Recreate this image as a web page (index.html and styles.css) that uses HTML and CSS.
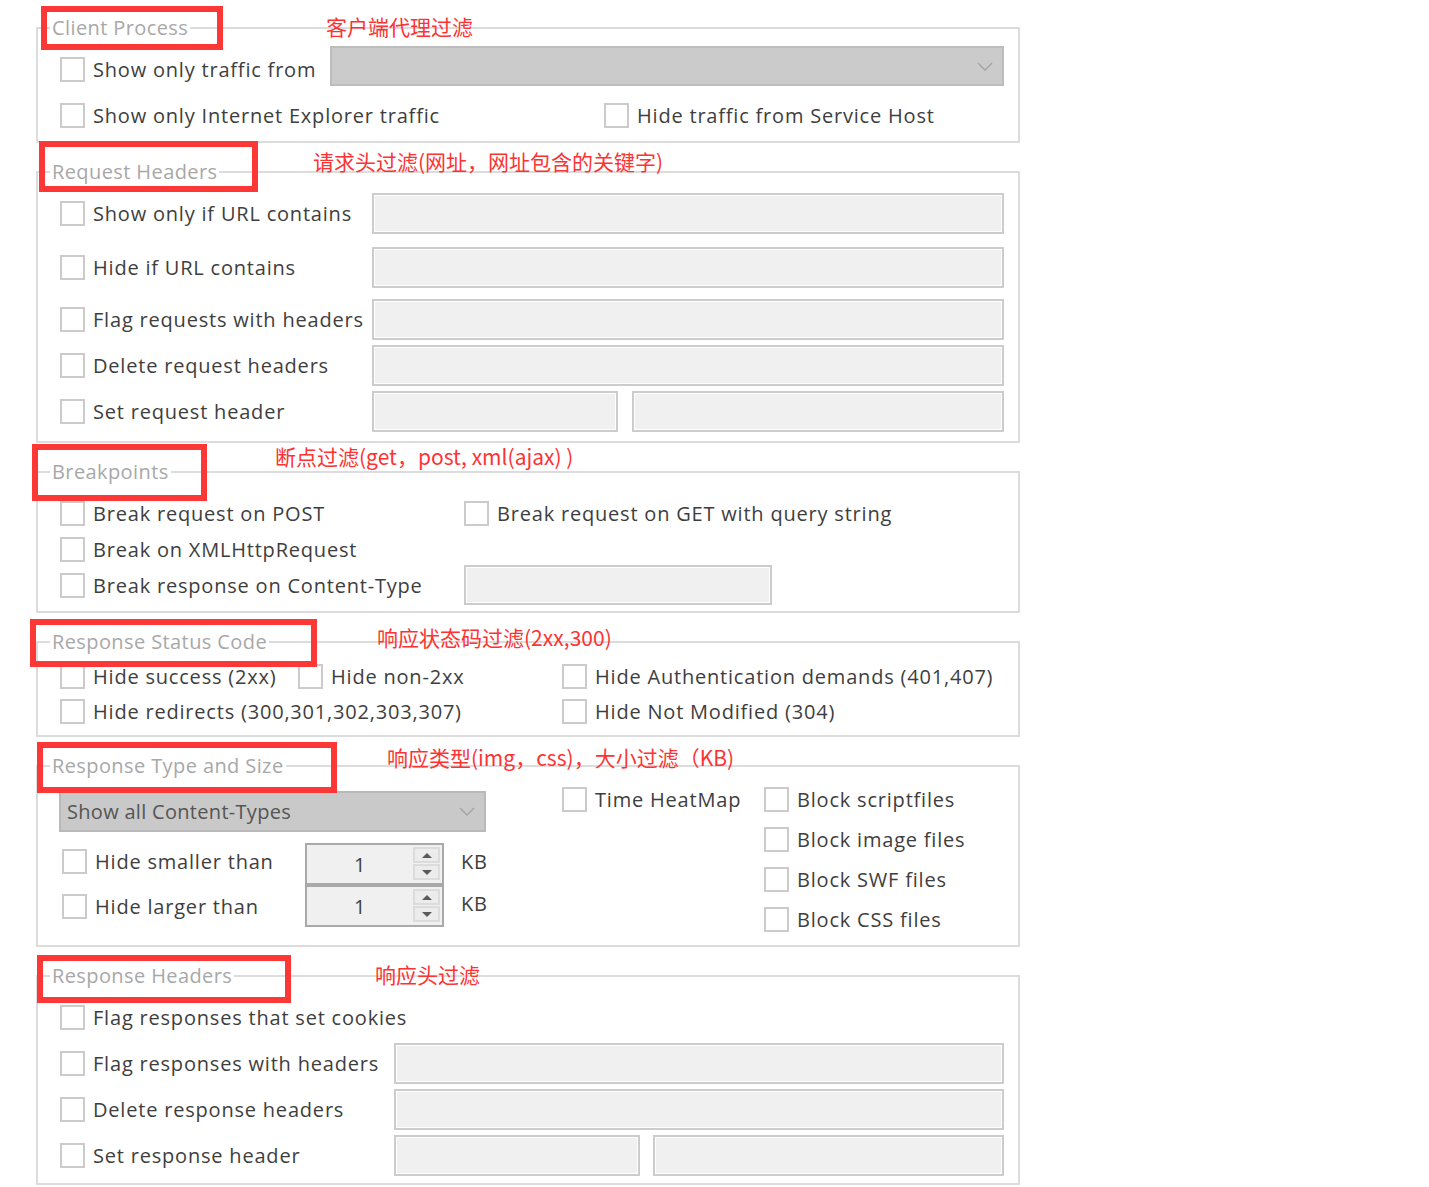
FILE: index.html
```html
<!DOCTYPE html>
<html lang="en">
<head>
<meta charset="utf-8">
<title>Filters</title>
<link rel="stylesheet" href="styles.css">
</head>
<body>
<main class="page">

  <section class="group g-client">
    <div class="legend">Client Process</div>
    <div class="rows">
      <div class="row h40">
        <label class="check w270 drop3"><span class="box"></span>Show only traffic from</label>
        <div class="select grow">
          <svg class="chev" viewBox="0 0 16 9" width="16" height="9"><polyline points="1,1 8,8 15,1"/></svg>
        </div>
      </div>
      <div class="row h40 mt9">
        <label class="check w544"><span class="box"></span>Show only Internet Explorer traffic</label>
        <label class="check"><span class="box"></span>Hide traffic from Service Host</label>
      </div>
    </div>
  </section>

  <section class="group g-req">
    <div class="legend">Request Headers</div>
    <div class="rows">
      <div class="row h46">
        <label class="check w312"><span class="box"></span>Show only if URL contains</label>
        <div class="field grow"></div>
      </div>
      <div class="row h46 mt8">
        <label class="check w312"><span class="box"></span>Hide if URL contains</label>
        <div class="field grow"></div>
      </div>
      <div class="row h46 mt6">
        <label class="check w312"><span class="box"></span>Flag requests with headers</label>
        <div class="field grow"></div>
      </div>
      <div class="row h46">
        <label class="check w312"><span class="box"></span>Delete request headers</label>
        <div class="field grow"></div>
      </div>
      <div class="row h46">
        <label class="check w312"><span class="box"></span>Set request header</label>
        <div class="field w246"></div>
        <div class="field grow ml14"></div>
      </div>
    </div>
  </section>

  <section class="group g-break">
    <div class="legend">Breakpoints</div>
    <div class="rows">
      <div class="row h36">
        <label class="check w404"><span class="box"></span>Break request on POST</label>
        <label class="check"><span class="box"></span>Break request on GET with query string</label>
      </div>
      <div class="row h36">
        <label class="check"><span class="box"></span>Break on XMLHttpRequest</label>
      </div>
      <div class="row h36">
        <label class="check w404"><span class="box"></span>Break response on Content-Type</label>
        <div class="field w308 h40"></div>
      </div>
    </div>
  </section>

  <section class="group g-status">
    <div class="legend">Response Status Code</div>
    <div class="rows">
      <div class="row h35">
        <label class="check w238"><span class="box"></span>Hide success (2xx)</label>
        <label class="check w264"><span class="box"></span>Hide non-2xx</label>
        <label class="check"><span class="box"></span>Hide Authentication demands (401,407)</label>
      </div>
      <div class="row h35">
        <label class="check w502"><span class="box"></span>Hide redirects (300,301,302,303,307)</label>
        <label class="check"><span class="box"></span>Hide Not Modified (304)</label>
      </div>
    </div>
  </section>

  <section class="group g-type">
    <div class="legend">Response Type and Size</div>
    <div class="cols">
      <div class="col-left">
        <div class="select ctype">
          <span class="select-text">Show all Content-Types</span>
          <svg class="chev" viewBox="0 0 16 9" width="16" height="9"><polyline points="1,1 8,8 15,1"/></svg>
        </div>
        <div class="row h42 mt11">
          <label class="check w243 ml2 lift3"><span class="box"></span>Hide smaller than</label>
          <div class="spin">
            <span class="spin-val">1</span>
            <span class="spin-btns"><span class="spin-up"></span><span class="spin-down"></span></span>
          </div>
          <span class="unit lift3">KB</span>
        </div>
        <div class="row h42">
          <label class="check w243 ml2"><span class="box"></span>Hide larger than</label>
          <div class="spin">
            <span class="spin-val">1</span>
            <span class="spin-btns"><span class="spin-up"></span><span class="spin-down"></span></span>
          </div>
          <span class="unit lift3">KB</span>
        </div>
      </div>
      <div class="col-mid">
        <div class="row h40">
          <label class="check"><span class="box"></span>Time HeatMap</label>
        </div>
      </div>
      <div class="col-right">
        <div class="row h40"><label class="check"><span class="box"></span>Block scriptfiles</label></div>
        <div class="row h40"><label class="check"><span class="box"></span>Block image files</label></div>
        <div class="row h40"><label class="check"><span class="box"></span>Block SWF files</label></div>
        <div class="row h40"><label class="check"><span class="box"></span>Block CSS files</label></div>
      </div>
    </div>
  </section>

  <section class="group g-resp">
    <div class="legend">Response Headers</div>
    <div class="rows">
      <div class="row h46">
        <label class="check"><span class="box"></span>Flag responses that set cookies</label>
      </div>
      <div class="row h46">
        <label class="check w334"><span class="box"></span>Flag responses with headers</label>
        <div class="field grow"></div>
      </div>
      <div class="row h46">
        <label class="check w334"><span class="box"></span>Delete response headers</label>
        <div class="field grow"></div>
      </div>
      <div class="row h46">
        <label class="check w334"><span class="box"></span>Set response header</label>
        <div class="field w246"></div>
        <div class="field grow ml13"></div>
      </div>
    </div>
  </section>

</main>

<div class="notes" aria-hidden="true">
  <div class="mark mark-client"></div>
  <div class="mark mark-req"></div>
  <div class="mark mark-break"></div>
  <div class="mark mark-status"></div>
  <div class="mark mark-type"></div>
  <div class="mark mark-resp"></div>
  <div class="note note-client">客户端代理过滤</div>
  <div class="note note-req">请求头过滤(网址，网址包含的关键字)</div>
  <div class="note note-break">断点过滤(get，post, xml(ajax) )</div>
  <div class="note note-status">响应状态码过滤(2xx,300)</div>
  <div class="note note-type">响应类型(img，css)，大小过滤（KB)</div>
  <div class="note note-resp">响应头过滤</div>
</div>
</body>
</html>
```

FILE: styles.css
```css
* { box-sizing: border-box; }

html, body {
  margin: 0;
  background: #ffffff;
}

body {
  font-family: "Open Sans", "Noto Sans", "DejaVu Sans", sans-serif;
  font-size: 20px;
  letter-spacing: 0.8px;
  color: #3e3e3e;
  height: 1187px;
  overflow: hidden;
}

.page {
  padding: 27px 0 0 36px;
  display: flex;
  flex-direction: column;
  gap: 28px;
}

.group {
  width: 984px;
  border: 2px solid #dcdcdc;
  padding: 0 14px 6px 22px;
}

.legend {
  width: fit-content;
  height: 24px;
  line-height: 24px;
  margin: -13px 0 0 -10px;
  padding: 0 2px;
  background: #ffffff;
  color: #a8a8a8;
  letter-spacing: 0.4px;
  white-space: nowrap;
}

.rows {
  display: flex;
  flex-direction: column;
}

.row {
  display: flex;
  align-items: center;
}

.h35 { height: 35px; }
.h36 { height: 36px; }
.h40 { height: 40px; }
.h42 { height: 42px; }
.h46 { height: 46px; }

.mt6 { margin-top: 6px; }
.mt8 { margin-top: 8px; }
.mt9 { margin-top: 9px; }
.mt11 { margin-top: 11px; }
.ml2 { margin-left: 2px; }
.ml13 { margin-left: 13px; }
.ml14 { margin-left: 14px; }

/* shift an item within a centred row */
.drop3 { margin-top: 6px; }
.lift3 { margin-bottom: 6px; }

.w238 { width: 238px; }
.w243 { width: 243px; }
.w246 { width: 246px; }
.w264 { width: 264px; }
.w270 { width: 270px; }
.w308 { width: 308px; }
.w312 { width: 312px; }
.w334 { width: 334px; }
.w404 { width: 404px; }
.w502 { width: 502px; }
.w544 { width: 544px; }

.grow { flex: 1 1 auto; }

.check {
  display: flex;
  align-items: center;
  gap: 8px;
  flex: none;
  white-space: nowrap;
}

.box {
  width: 25px;
  height: 25px;
  flex: none;
  border: 2px solid #cbcbcb;
  background: #ffffff;
}

.field {
  height: 41px;
  flex-shrink: 0;
  border: 2px solid #cccccc;
  background: #f0f0f0;
  box-shadow: inset 0 0 0 1px #ffffff;
}

.field.h40 { height: 40px; }

.select {
  height: 40px;
  display: flex;
  align-items: center;
  justify-content: flex-end;
  background: #cbcbcb;
  border: 2px solid #bdbdbd;
  padding: 0 9px 0 6px;
}

.chev {
  flex: none;
  fill: none;
  stroke: #a3a3a3;
  stroke-width: 1.4;
}

.ctype {
  width: 427px;
  height: 41px;
  margin: 13px 0 0 -1px;
  justify-content: space-between;
  background: #c9c9c9;
  border-color: #b9b9b9;
}

.select-text {
  color: #555555;
  letter-spacing: 0.3px;
  white-space: nowrap;
}

.cols {
  display: flex;
}

.col-left { width: 502px; }
.col-mid { width: 202px; padding-top: 1px; }
.col-right { flex: 1; padding-top: 1px; }

.spin {
  width: 139px;
  height: 42px;
  flex: none;
  display: flex;
  border: 2px solid #a9a9a9;
  background: #f0f0f0;
}

.spin-val {
  flex: 1;
  display: flex;
  align-items: center;
  justify-content: center;
  color: #404040;
}

.spin-btns {
  width: 29px;
  display: flex;
  flex-direction: column;
  gap: 1px;
  padding: 2px 2px 3px 0;
}

.spin-up,
.spin-down {
  flex: 1;
  display: flex;
  align-items: center;
  justify-content: center;
  background: #ececec;
  border: 2px solid #dcdcdc;
}

.spin-up::after,
.spin-down::after {
  content: "";
  width: 0;
  height: 0;
  border-left: 5px solid transparent;
  border-right: 5px solid transparent;
}

.spin-up::after { border-bottom: 5px solid #5a5a5a; }
.spin-down::after { border-top: 5px solid #5a5a5a; }

.unit {
  margin-left: 17px;
  white-space: nowrap;
}

.g-client .rows { padding-top: 6px; }
.g-client { padding-bottom: 6px; }
.g-req .rows { padding-top: 6px; }
.g-req { padding-bottom: 7px; }
.g-break .rows { padding-top: 11px; }
.g-break { padding-bottom: 8px; }
.g-status .rows { padding-top: 5px; }
.g-status { padding-bottom: 6px; }
.g-type { padding-bottom: 6px; }
.g-resp .rows { padding-top: 6px; }
.g-resp { padding-bottom: 5px; }

/* annotation layer drawn over the screenshot */
.notes {
  position: absolute;
  left: 0;
  top: 0;
  width: 1429px;
  height: 1187px;
  pointer-events: none;
  letter-spacing: 0;
}

.mark {
  position: absolute;
  border: 6px solid #fd3636;
}

.mark-client { left: 41px; top: 6px; width: 182px; height: 44px; }
.mark-req { left: 39px; top: 141px; width: 219px; height: 51px; }
.mark-break { left: 32px; top: 444px; width: 175px; height: 57px; }
.mark-status { left: 30px; top: 619px; width: 287px; height: 48px; }
.mark-type { left: 37px; top: 742px; width: 300px; height: 51px; }
.mark-resp { left: 37px; top: 955px; width: 254px; height: 48px; }

.note {
  position: absolute;
  color: #fd3333;
  font-family: "Noto Sans CJK SC", "Noto Sans", sans-serif;
  font-size: 21px;
  line-height: 28px;
  white-space: nowrap;
}

.note-client { left: 326px; top: 12px; }
.note-req { left: 313px; top: 147px; }
.note-break { left: 275px; top: 442px; }
.note-status { left: 377px; top: 623px; }
.note-type { left: 387px; top: 743px; }
.note-resp { left: 375px; top: 960px; }
```
